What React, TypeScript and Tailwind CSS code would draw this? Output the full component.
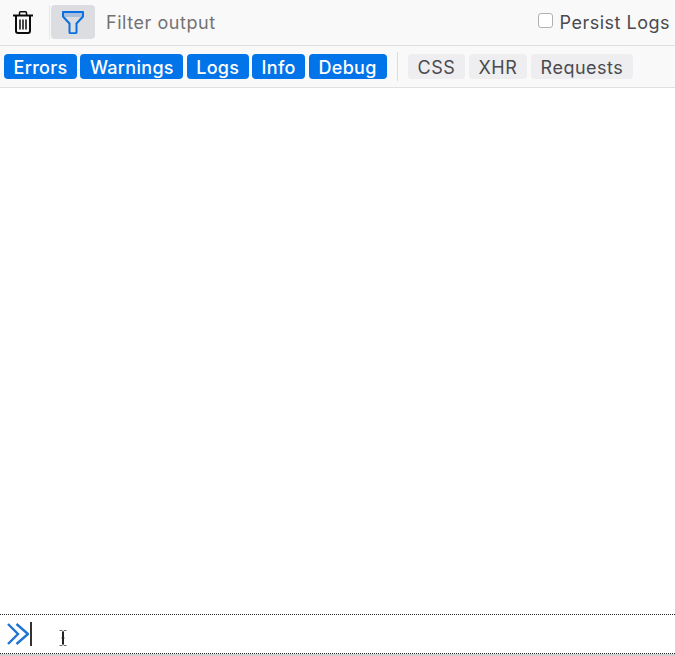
const activeFilters = [
  { label: "Errors", width: "w-[73px]" },
  { label: "Warnings", width: "w-[103px]" },
  { label: "Logs", width: "w-[62px]" },
  { label: "Info", width: "w-[53px]" },
  { label: "Debug", width: "w-[78px]" },
];

const netFilters = [
  { label: "CSS", width: "w-[57px]" },
  { label: "XHR", width: "w-[58px]" },
  { label: "Requests", width: "w-[102px]" },
];

function TrashIcon() {
  return (
    <svg width="20" height="23" viewBox="0 0 20 23" fill="none" stroke="#0c0c0d" strokeWidth="1.5">
      <path d="M0 4.500h20" strokeWidth="2" />
      <path d="M6.500 4V1.800c0-.6.400-1 1-1h5c.6 0 1 .4 1 1V4" />
      <path d="M3 5v15c0 1.200.8 2 2 2h10c1.200 0 2-.8 2-2V5" strokeWidth="2" />
      <path d="M7 8.500v10M10 8.500v10M13 8.500v10" />
    </svg>
  );
}

function FunnelIcon() {
  return (
    <svg width="22" height="23" viewBox="0 0 22 23" fill="none" stroke="#0a6fe0" strokeWidth="2" strokeLinejoin="round">
      <path d="M2 2h18v4H2z" fill="#a9bfdc" stroke="none" />
      <path d="M1 1h20v4.500l-6.500 7v8.500c0 .8-.5 1.200-1.200 1.200H8.700c-.7 0-1.200-.4-1.200-1.200v-8.500L1 5.500z" />
    </svg>
  );
}

function PromptIcon() {
  return (
    <svg width="22" height="22" viewBox="0 0 22 22" fill="none" stroke="#1f73d4" strokeWidth="2.400">
      <path d="M1 1 11 11 1 21" />
      <path d="M9.500 1 21 11 9.500 21" />
    </svg>
  );
}

function TextCursor() {
  return (
    <svg width="8" height="16" viewBox="0 0 8 16" fill="none" stroke="#222" strokeWidth="1">
      <path d="M0.500 0.500h2.500l1 1 1-1h2.500M0.500 15.500h2.500l1-1 1 1h2.500" stroke="#666" />
      <path d="M4 1.500v13" strokeWidth="2" />
      <path d="M2.500 8h3" />
    </svg>
  );
}

export default function App() {
  return (
    <div className="flex h-[656px] w-[675px] flex-col overflow-hidden bg-white font-['Inter',sans-serif]">
      <div className="flex h-[46px] items-center border-b border-[#e0e0e2] bg-[#f9f9fa] pb-[1px]">
        <div className="ml-[13px] flex w-[36px]">
          <TrashIcon />
        </div>
        <div className="h-[34px] w-px bg-[#e8e8ea]" />
        <div className="ml-[1px] flex h-[34px] w-[44px] items-center justify-center rounded-[4px] bg-[#dcdde1]">
          <FunnelIcon />
        </div>
        <span className="ml-[11px] text-[18px] tracking-[0.55px] text-[#737373]">Filter output</span>
        <label className="ml-auto mr-[5px] flex items-center gap-[7px] text-[18px] tracking-[0.5px] text-[#4a4a4f]">
          <span className="mb-[3px] h-[15px] w-[15px] rounded-[3px] border border-[#b1b1b3] bg-white" />
          Persist Logs
        </label>
      </div>

      <div className="flex h-[42px] items-center border-b border-[#e0e0e2] bg-[#f9f9fa] pl-[4px] pb-[1px]">
        <div className="flex gap-[3.400px]">
          {activeFilters.map((filter) => (
            <button
              key={filter.label}
              className={`flex h-[25px] items-center justify-center rounded-[4px] bg-[#0074e8] pt-[2px] text-[18px] font-medium tracking-[0.3px] text-white ${filter.width}`}
            >
              {filter.label}
            </button>
          ))}
        </div>
        <div className="ml-[10.400px] mr-[10px] h-[29px] w-px bg-[#dcdcde]" />
        <div className="flex gap-[4px]">
          {netFilters.map((filter) => (
            <button
              key={filter.label}
              className={`flex h-[25px] items-center justify-center rounded-[4px] bg-[#eeeef0] pt-[2px] text-[18px] tracking-[0.5px] text-[#4a4a4f] ${filter.width}`}
            >
              {filter.label}
            </button>
          ))}
        </div>
      </div>

      <div className="flex-1" />

      <div className="flex h-[40px] items-center border-y border-dotted border-[#222] pl-[7px]">
        <PromptIcon />
        <div className="ml-[1px] h-[24px] w-[2px] bg-[#333]" />
        <div className="ml-[27px] mt-[7px]">
          <TextCursor />
        </div>
      </div>
      <div className="h-[2px] bg-[#d0d0d0]" />
    </div>
  );
}
